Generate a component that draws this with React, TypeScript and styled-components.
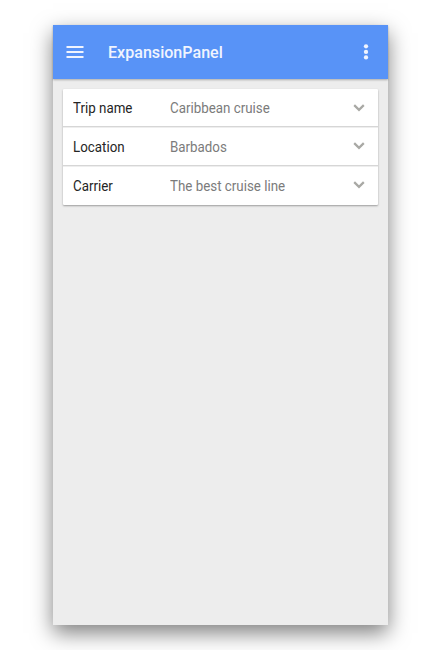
import React from "react";
import styled, { createGlobalStyle } from "styled-components";

const GlobalStyle = createGlobalStyle`
  * { box-sizing: border-box; }
  html, body { margin: 0; padding: 0; background: #fff; }
  body { font-family: Roboto, "Liberation Sans", sans-serif; overflow: hidden; }
`;

const Stage = styled.div`
  height: 650px;
  padding: 25px 52px 25px 53px;
`;

const Screen = styled.main`
  display: flex;
  flex-direction: column;
  height: 600px;
  background: #ededed;
  box-shadow: 0 8px 20px rgba(0, 0, 0, 0.5);
`;

const AppBar = styled.header`
  display: flex;
  align-items: center;
  height: 54px;
  flex: none;
  padding: 0 13px;
  background: #5893f7;
  color: #f0f4fe;
  box-shadow: 0 1px 2px rgba(0, 0, 0, 0.28);
`;

const BarIcon = styled.svg`
  display: block;
  flex: none;
  fill: currentColor;
`;

const Title = styled.h1`
  flex: 1;
  margin: 2px 0 0 24px;
  font-size: 16.5px;
  transform: scaleX(0.975);
  transform-origin: 0 50%;
  line-height: 20px;
  font-weight: 500;
  white-space: nowrap;
`;

const PanelList = styled.section`
  margin: 10px 10px 0;
  border-radius: 1px;
  background: #fff;
  box-shadow: 0 1px 2px rgba(0, 0, 0, 0.34);
`;

const Panel = styled.div`
  display: flex;
  align-items: center;
  height: 39px;
  padding: 0 12px 0 10px;
  font-size: 14px;
  line-height: 19px;
  border-top: 1px solid #d6d6d6;
  box-shadow: inset 0 1px #eeeeee;
  &:first-child { height: 37px; border-top: 0; box-shadow: none; }
  &:last-child { height: 40px; padding-bottom: 1px; }
`;

const Label = styled.span`
  width: 97px;
  padding-top: 2px;
  color: #252525;
  transform: scaleX(0.953);
  transform-origin: 0 50%;
`;

const Value = styled.span`
  flex: 1;
  padding-top: 2px;
  color: #7b7b7b;
  transform: scaleX(0.953);
  transform-origin: 0 50%;
`;

const Chevron = styled.svg`
  display: block;
  fill: none;
  stroke: #a9a9a5;
  stroke-width: 2.2;
`;

const trips = [
  { label: "Trip name", value: "Caribbean cruise" },
  { label: "Location", value: "Barbados" },
  { label: "Carrier", value: "The best cruise line" },
];

export default function App() {
  return (
    <>
      <GlobalStyle />
      <Stage>
        <Screen>
          <AppBar>
            <BarIcon width="18" height="12" viewBox="0 0 18 12">
              <path d="M.5 0h17v2H.5zM.5 5h17v2H.5zM.5 10h17v2H.5z" />
            </BarIcon>
            <Title>ExpansionPanel</Title>
            <BarIcon width="18" height="16" viewBox="0 0 18 16">
              <circle cx="9" cy="2.3" r="2.15" />
              <circle cx="9" cy="7.9" r="2.15" />
              <circle cx="9" cy="13.4" r="2.15" />
            </BarIcon>
          </AppBar>
          <PanelList>
            {trips.map(({ label, value }) => (
              <Panel key={label}>
                <Label>{label}</Label>
                <Value>{value}</Value>
                <Chevron width="14" height="10" viewBox="0 0 14 10">
                  <path d="M2.2 2.1L7 6.9l4.8-4.8" />
                </Chevron>
              </Panel>
            ))}
          </PanelList>
        </Screen>
      </Stage>
    </>
  );
}
